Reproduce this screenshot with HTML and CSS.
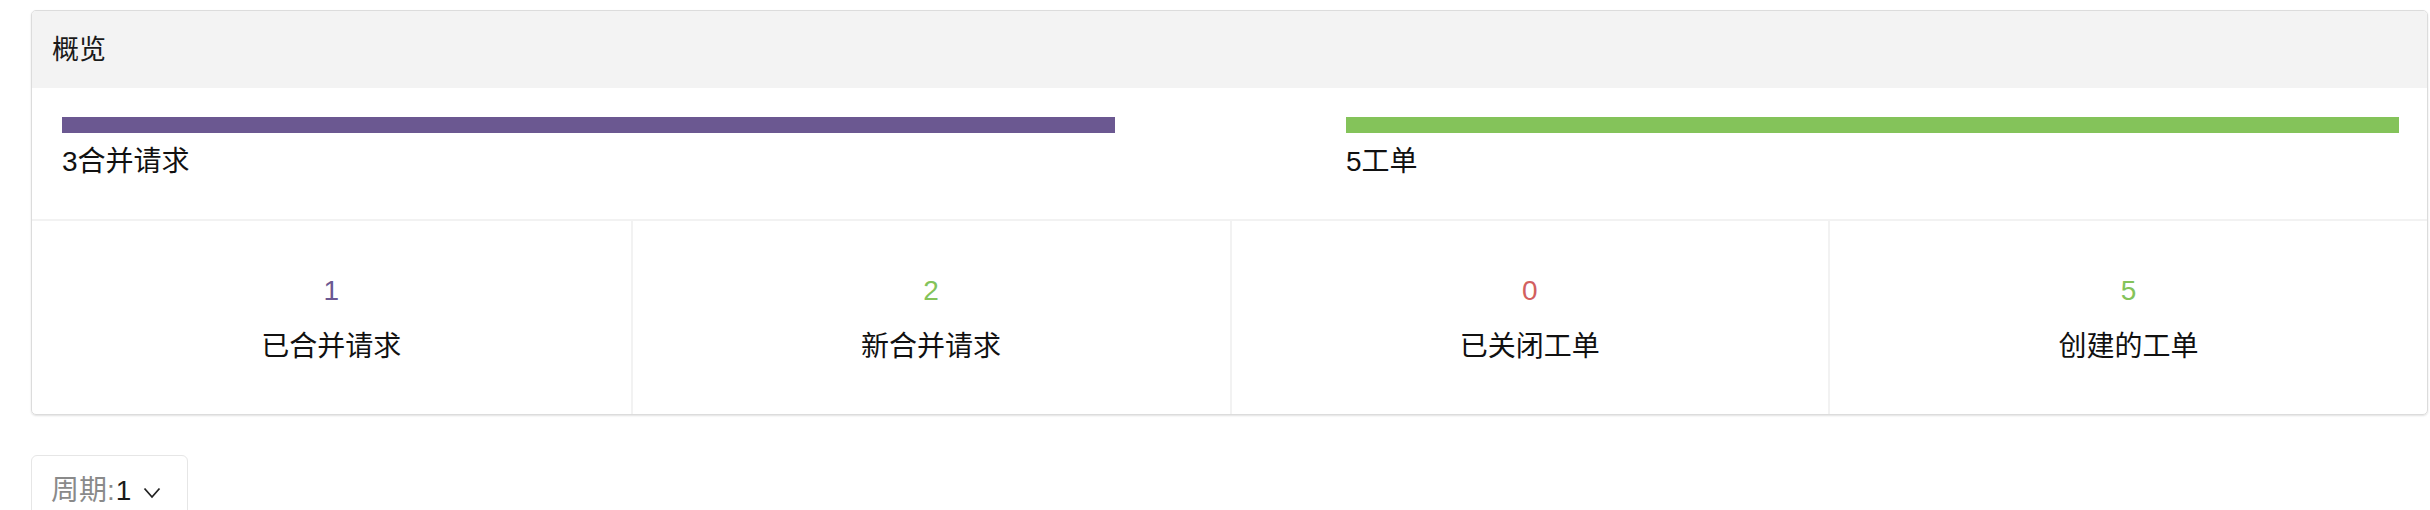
FILE: index.html
```html
<!DOCTYPE html>
<html lang="zh">
<head>
<meta charset="utf-8">
<title>概览</title>
<link rel="stylesheet" href="styles.css">
</head>
<body>
<div class="page">
  <section class="card">
    <header class="card-head">概览</header>
    <div class="bars">
      <div class="bar-item">
        <div class="bar bar-purple"></div>
        <div class="bar-label">3合并请求</div>
      </div>
      <div class="bar-item">
        <div class="bar bar-green"></div>
        <div class="bar-label">5工单</div>
      </div>
    </div>
    <div class="stats">
      <div class="stat">
        <div class="stat-num purple">1</div>
        <div class="stat-label">已合并请求</div>
      </div>
      <div class="stat">
        <div class="stat-num green">2</div>
        <div class="stat-label">新合并请求</div>
      </div>
      <div class="stat">
        <div class="stat-num red">0</div>
        <div class="stat-label">已关闭工单</div>
      </div>
      <div class="stat">
        <div class="stat-num green">5</div>
        <div class="stat-label">创建的工单</div>
      </div>
    </div>
  </section>
  <div class="period">
    <span class="period-key">周期:</span><span class="period-val">1</span>
    <svg class="chev" width="18" height="12" viewBox="0 0 18 12"><polyline points="1.5,1.5 9,10 16.5,1.5" fill="none" stroke="#222" stroke-width="1.8"/></svg>
  </div>
</div>
</body>
</html>
```
FILE: styles.css
```css
* { box-sizing: border-box; }
html, body { margin: 0; padding: 0; background: #fff; }
body {
  font-family: "Liberation Sans", "Noto Sans CJK SC", sans-serif;
  font-size: 28px;
  color: #111;
  overflow: hidden;
}
.page {
  padding: 10px 2px 0 31px;
}
.card {
  border: 1px solid #dcdcdc;
  border-radius: 5px;
  box-shadow: 0 1px 2px rgba(0,0,0,0.12);
  overflow: hidden;
}
.card-head {
  height: 77px;
  background: #f3f3f3;
  padding-left: 20px;
  display: flex;
  align-items: center;
  color: #1a1a1a;
  font-size: 27px;
  line-height: 30px;
}
.bars {
  display: grid;
  grid-template-columns: 1fr 1fr;
  column-gap: 231px;
  padding: 29px 28px 42px 30px;
  border-bottom: 2px solid #f2f2f2;
}
.bar {
  height: 16px;
}
.bar-purple { background: #6b5891; }
.bar-green { background: #84c35a; }
.bar-label {
  margin-top: 14px;
  line-height: 30px;
}
.stats {
  display: grid;
  grid-template-columns: repeat(4, 1fr);
}
.stat {
  display: flex;
  flex-direction: column;
  align-items: center;
  padding: 55px 0 52px;
  border-left: 2px solid #f2f2f2;
}
.stat:first-child { border-left: none; }
.stat-num {
  line-height: 30px;
}
.stat-label {
  margin-top: 26px;
  line-height: 30px;
}
.purple { color: #6b5891; }
.green { color: #84c35a; }
.red { color: #d2605f; }
.period {
  margin-top: 40px;
  width: 157px;
  height: 80px;
  border: 1px solid #e6e6e6;
  border-radius: 6px;
  padding: 20px 0 0 19px;
  display: flex;
  align-items: flex-start;
  line-height: 30px;
}
.period-key { color: #8a8a8a; }
.period-val { color: #1a1a1a; margin-left: 1px; }
.chev { margin: 11px 0 0 12px; }
```
